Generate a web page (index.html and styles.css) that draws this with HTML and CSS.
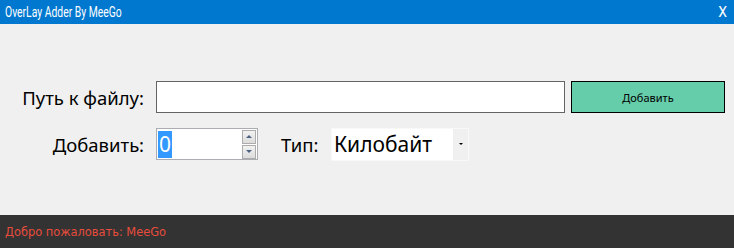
FILE: index.html
```html
<!DOCTYPE html>
<html lang="ru">
<head>
<meta charset="utf-8">
<title>OverLay Adder By MeeGo</title>
<link rel="stylesheet" href="styles.css">
</head>
<body>
<div class="window">
  <div class="titlebar">
    <span class="title">OverLay Adder By MeeGo</span>
    <span class="close">X</span>
  </div>
  <div class="main">
    <div class="form">
      <label class="label">Путь к файлу:</label>
      <div class="row">
        <div class="path-input"></div>
        <button class="add-btn">Добавить</button>
      </div>
      <label class="label">Добавить:</label>
      <div class="row row2">
        <div class="spin">
          <span class="spin-value">0</span>
          <div class="spin-btns">
            <span class="spin-btn"><i class="tri up"></i></span>
            <span class="spin-btn"><i class="tri down"></i></span>
          </div>
        </div>
        <span class="label type-label">Тип:</span>
        <div class="combo">
          <span class="combo-text">Килобайт</span>
          <span class="combo-arrow"><i class="tri-small"></i></span>
        </div>
      </div>
    </div>
  </div>
  <div class="statusbar">
    <span class="status">Добро пожаловать: MeeGo</span>
  </div>
</div>
</body>
</html>
```

FILE: styles.css
```css
html, body {
  margin: 0;
  padding: 0;
}
body {
  width: 734px;
  height: 248px;
  overflow: hidden;
  background: #f0f0f0;
  font-family: "Noto Sans", "Open Sans", sans-serif;
}
.window {
  display: flex;
  flex-direction: column;
  height: 248px;
}
.titlebar {
  height: 24px;
  background: #0078cf;
  color: #ffffff;
  display: flex;
  align-items: center;
  justify-content: space-between;
  padding: 0 7px 0 5px;
  font-family: "Roboto", sans-serif;
  font-size: 14px;
}
.title {
  display: inline-block;
  transform: scaleX(0.74);
  transform-origin: left center;
}
.close {
  font-family: "Roboto", sans-serif;
  font-size: 14px;
}
.main {
  flex: 1;
  padding-top: 57px;
}
.form {
  display: grid;
  grid-template-columns: 144px 1fr;
  column-gap: 12px;
  row-gap: 15px;
}
.label {
  justify-self: end;
  align-self: center;
  font-size: 18.5px;
  color: #000000;
}
.row {
  display: flex;
  align-items: stretch;
  height: 32px;
}
.path-input {
  width: 407px;
  background: #ffffff;
  border: 1px solid #646464;
}
.add-btn {
  margin-left: 6px;
  width: 154px;
  background: #66cdaa;
  border: 1px solid #000000;
  font-family: "Noto Sans", sans-serif;
  font-size: 11px;
  color: #000000;
  padding: 0;
}
.row2 {
  align-items: center;
}
.spin {
  width: 99px;
  height: 30px;
  background: #ffffff;
  border: 1px solid #abadb3;
  display: flex;
  align-items: center;
  justify-content: space-between;
  padding-left: 1px;
  box-sizing: content-box;
}
.spin-value {
  background: #3399ff;
  color: #ffffff;
  font-size: 21px;
  line-height: 27px;
  height: 27px;
  padding: 0 1px;
}
.spin-btns {
  display: flex;
  flex-direction: column;
  gap: 1px;
  margin-right: 1px;
}
.spin-btn {
  width: 12px;
  height: 12px;
  border: 1px solid #acacac;
  background: linear-gradient(#f2f2f2, #dcdcdc);
  display: flex;
  align-items: center;
  justify-content: center;
}
.tri {
  width: 0;
  height: 0;
  border-left: 3px solid transparent;
  border-right: 3px solid transparent;
}
.tri.up {
  border-bottom: 3px solid #4d6185;
}
.tri.down {
  border-top: 3px solid #4d6185;
}
.type-label {
  justify-self: auto;
  margin-left: 23px;
  width: 50px;
}
.combo {
  width: 136px;
  height: 31px;
  background: #ffffff;
  border: 1px solid #f8f8f8;
  display: flex;
  align-items: center;
  justify-content: space-between;
}
.combo-text {
  font-size: 21px;
  padding-left: 2px;
  color: #000000;
}
.combo-arrow {
  width: 15px;
  align-self: stretch;
  background: #f0f0f0;
  display: flex;
  align-items: center;
  justify-content: center;
}
.tri-small {
  width: 0;
  height: 0;
  border-left: 2px solid transparent;
  border-right: 2px solid transparent;
  border-top: 2px solid #000000;
}
.statusbar {
  height: 33px;
  background: #333333;
  display: flex;
  align-items: center;
  padding-left: 5px;
}
.status {
  font-family: "DejaVu Sans Condensed", "DejaVu Sans", sans-serif;
  font-size: 12.7px;
  color: #e74c3c;
}
```
